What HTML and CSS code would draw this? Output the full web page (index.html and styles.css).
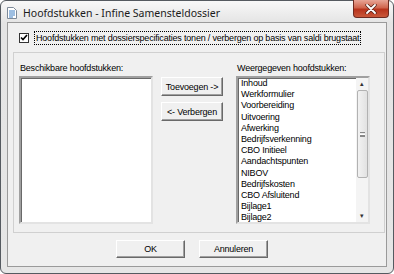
FILE: index.html
```html
<!DOCTYPE html>
<html lang="nl">
<head>
  <meta charset="UTF-8">
  <title>Hoofdstukken - Infine Samensteldossier</title>
  <link rel="stylesheet" href="styles.css">
</head>
<body>
  <div class="window">
    <div class="titlebar">
      <svg class="app-icon" width="10" height="12" viewBox="0 0 10 12">
        <path d="M0.5 0.5h6l3 3v8h-9z" fill="#fff" stroke="#7d8a99"/>
        <path d="M2 4h6M2 6h6M2 8h6M2 10h4" stroke="#3c7fc4" stroke-width="1"/>
      </svg>
      <span class="title">Hoofdstukken - Infine Samensteldossier</span>
      <div class="close">
        <svg width="12" height="10" viewBox="0 0 12 10">
          <path d="M2 1l8 8M10 1l-8 8" stroke="#5a2218" stroke-width="3.4" stroke-linecap="round"/>
          <path d="M2 1l8 8M10 1l-8 8" stroke="#fff" stroke-width="1.8" stroke-linecap="round"/>
        </svg>
      </div>
    </div>

    <div class="client">
      <div class="check-row">
        <span class="checkbox">
          <svg width="8" height="8" viewBox="0 0 8 8"><path d="M1 3.5l2 2 4-4.5" fill="none" stroke="#000" stroke-width="1.6"/></svg>
        </span>
        <span class="focus">Hoofdstukken met dossierspecificaties tonen / verbergen op basis van saldi brugstaat</span>
      </div>

      <div class="panel">
        <div class="column">
          <div class="label">Beschikbare hoofdstukken:</div>
          <div class="listbox"></div>
        </div>

        <div class="actions">
          <button class="btn btn-side">Toevoegen -&gt;</button>
          <button class="btn btn-side">&lt;- Verbergen</button>
        </div>

        <div class="column">
          <div class="label">Weergegeven hoofdstukken:</div>
          <div class="listbox">
            <div class="items">
              <div>Inhoud</div>
              <div>Werkformulier</div>
              <div>Voorbereiding</div>
              <div>Uitvoering</div>
              <div>Afwerking</div>
              <div>Bedrijfsverkenning</div>
              <div>CBO Initieel</div>
              <div>Aandachtspunten</div>
              <div>NIBOV</div>
              <div>Bedrijfskosten</div>
              <div>CBO Afsluitend</div>
              <div>Bijlage1</div>
              <div>Bijlage2</div>
            </div>
            <div class="scrollbar">
              <span class="arrow">&#9652;</span>
              <div class="thumb"><span class="grip"></span></div>
              <span class="arrow arrow-down">&#9662;</span>
            </div>
          </div>
        </div>
      </div>

      <div class="footer">
        <button class="btn btn-foot">OK</button>
        <button class="btn btn-foot">Annuleren</button>
      </div>
    </div>
  </div>
</body>
</html>
```

FILE: styles.css
```css
body {
margin: 0;
background: #fff;
}

.window {
width: 394px;
height: 274px;
box-sizing: border-box;
border: 1px solid #555a60;
border-radius: 6px;
background: linear-gradient(#f8f8f8, #e4e4e4 22px, #e6e6e6);
display: flex;
flex-direction: column;
padding: 0 6px 6px 6px;
}

.titlebar {
height: 21px;
display: flex;
align-items: center;
position: relative;
}
.app-icon {
margin-top: 3px;
}
.title {
margin-left: 6px;
margin-top: 3px;
font: 10.5px "Noto Sans", "DejaVu Sans", sans-serif;
color: #1a1a1a;
}
.close {
position: absolute;
right: -2px;
top: -1px;
width: 36px;
height: 18px;
box-sizing: border-box;
border: 1px solid #6e2a20;
border-top: none;
border-radius: 0 0 4px 4px;
background: linear-gradient(#e8a596, #d0654e 45%, #b8331c 55%, #c9583a);
display: flex;
align-items: center;
justify-content: center;
}

.client {
flex: 1;
background: #f0f0f0;
border: 1px solid #9a9a9a;
display: flex;
flex-direction: column;
font: 9px "Liberation Sans", Arial, sans-serif;
letter-spacing: -0.2px;
color: #000;
}

.check-row {
height: 29px;
display: flex;
align-items: center;
padding-left: 11px;
}
.checkbox {
width: 8px;
height: 8px;
border: 1px solid #333;
background: #fff;
display: flex;
align-items: center;
justify-content: center;
}
.focus {
margin-left: 5px;
padding: 1px 1px 1px 1px;
border: 1px dotted #000;
white-space: nowrap;
}

.panel {
margin-left: 5px;
width: 365px;
height: 179px;
border: 1px solid #d0d0d0;
display: flex;
padding: 0 0 0 5px;
}

.column {
display: flex;
flex-direction: column;
}
.label {
height: 11px;
margin-top: 10px;
margin-bottom: 2px;
padding-left: 1px;
white-space: nowrap;
}
.listbox {
width: 130px;
height: 144px;
background: #fff;
border: 2px solid;
border-color: #a0a0a0 #e3e3e3 #e3e3e3 #a0a0a0;
box-shadow: inset 1px 1px #696969;
display: flex;
}

.items {
flex: 1;
padding: 0 0 0 3px;
line-height: 11.2px;
}

.scrollbar {
width: 12px;
background: #f4f4f4;
display: flex;
flex-direction: column;
align-items: center;
}
.arrow {
height: 12px;
font-size: 7px;
line-height: 12px;
color: #333;
}
.arrow-down {
margin-top: auto;
}
.thumb {
width: 11px;
height: 88px;
box-sizing: border-box;
border: 1px solid #b2b2b2;
border-radius: 2px;
background: linear-gradient(90deg, #f2f2f2, #e2e2e2);
display: flex;
align-items: center;
justify-content: center;
}
.grip {
width: 5px;
height: 5px;
border-top: 1px solid #888;
border-bottom: 1px solid #888;
box-sizing: border-box;
background: linear-gradient(#fff 0 1px, #888 1px 2px, #fff 2px);
background-size: 5px 3px;
background-position: 0 1px;
background-repeat: no-repeat;
}

.actions {
width: 62px;
margin: 0 13px 0 8px;
display: flex;
flex-direction: column;
padding-top: 24px;
gap: 6px;
}

.btn {
font: 9px "Liberation Sans", Arial, sans-serif;
letter-spacing: -0.2px;
color: #000;
background: #f0f0f0;
border: 1px solid;
border-color: #fff #696969 #696969 #fff;
box-shadow: inset -1px -1px #a0a0a0;
padding: 0;
}
.btn-side {
height: 19px;
}

.footer {
display: flex;
gap: 14px;
padding-left: 108px;
margin-top: 7px;
}
.btn-foot {
width: 69px;
height: 18px;
}
```
